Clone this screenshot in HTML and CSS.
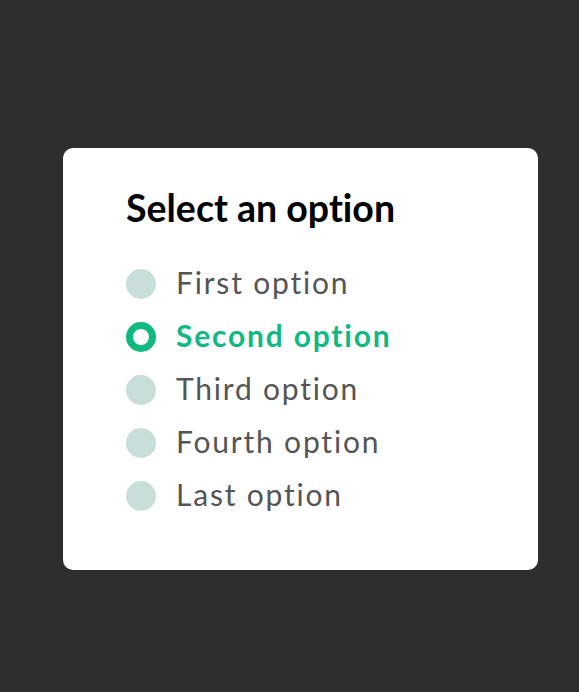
FILE: index.html
```html
<!DOCTYPE html>
<html lang="en">
<head>
	<meta charset="UTF-8">
	<title>Select an option</title>
	<link rel="stylesheet" href="styles.css">
</head>
<body>
	<div class="card">
		<h2 class="title">Select an option</h2>
		<ul class="options">
			<li class="option"><span class="dot"></span><span class="label">First option</span></li>
			<li class="option selected"><span class="dot"></span><span class="label">Second option</span></li>
			<li class="option"><span class="dot"></span><span class="label">Third option</span></li>
			<li class="option"><span class="dot"></span><span class="label">Fourth option</span></li>
			<li class="option"><span class="dot"></span><span class="label">Last option</span></li>
		</ul>
	</div>
</body>
</html>
```

FILE: styles.css
```css
html, body {
	margin: 0;
	padding: 0;
}

body {
	background: #2e2e2c;
	font-family: Lato, "Open Sans", sans-serif;
	font-variant-ligatures: none;
	height: 692px;
	overflow: hidden;
}

.card {
	width: 475px;
	height: 422px;
	box-sizing: border-box;
	margin: 148px 0 0 63px;
	padding: 38px 63px;
	background: #fff;
	border-radius: 10px;
}

.title {
	margin: 0 0 39px;
	font-size: 37.5px;
	font-weight: 700;
	line-height: 44px;
	color: #000;
}

.options {
	list-style: none;
	margin: 0;
	padding: 0;
	display: flex;
	flex-direction: column;
	gap: 23px;
}

.option {
	display: flex;
	align-items: center;
	gap: 20px;
	height: 30px;
	font-size: 30px;
	letter-spacing: 1.8px;
	color: #555;
}

.label {
	padding-bottom: 5px;
}

.dot {
	width: 30px;
	height: 30px;
	box-sizing: border-box;
	border-radius: 50%;
	background: #c8ded8;
	flex-shrink: 0;
}

.selected {
	color: #10b981;
	font-weight: 700;
}

.selected .dot {
	background: #fff;
	border: 7px solid #10b981;
}
```
